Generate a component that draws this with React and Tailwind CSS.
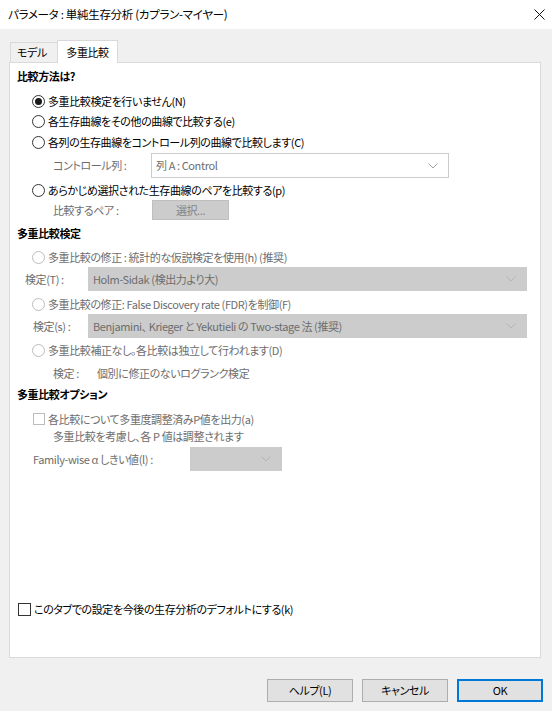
import React from 'react'

const font = { fontFamily: '"Noto Sans CJK JP", "Noto Sans", sans-serif' }

function Radio({ checked, disabled, label }) {
  return (
    <div className="flex items-center h-[16px] ml-[15px]">
      <span
        className={`w-[13px] h-[13px] rounded-full border flex items-center justify-center bg-white shrink-0 ${
          disabled ? 'border-[#bcbcbc]' : 'border-[#333333]'
        }`}
      >
        {checked && <span className="w-[7px] h-[7px] rounded-full bg-[#1a1a1a]" />}
      </span>
      <span className={`ml-[3px] whitespace-nowrap ${disabled ? 'text-[#6d6d6d]' : 'text-black'}`}>{label}</span>
    </div>
  )
}

function Chevron({ light }) {
  return (
    <svg width="10" height="6" viewBox="0 0 10 6" className="shrink-0">
      <path d="M0.5 0.5 L5 5 L9.5 0.5" fill="none" stroke={light ? '#b4b4b4' : '#a0a0a0'} strokeWidth="1" />
    </svg>
  )
}

function Select({ className, disabled, value }) {
  return (
    <div
      className={`flex items-center border pl-[4px] pr-[10px] ${
        disabled ? 'bg-[#cccccc] border-[#cccccc]' : 'bg-white border-[#cccccc]'
      } ${className}`}
    >
      <span className="flex-1 whitespace-nowrap text-[#6d6d6d]">{value}</span>
      <Chevron light={disabled} />
    </div>
  )
}

function Heading({ children, className }) {
  return <div className={`h-[16px] flex items-center font-bold text-black ${className}`}>{children}</div>
}

export default function App() {
  return (
    <div
      className="w-[552px] h-[711px] bg-[#f0f0f0] flex flex-col text-[11px] tracking-[-0.4px] leading-none overflow-hidden [font-feature-settings:'palt']"
      style={font}
    >
      {/* タイトルバー */}
      <div className="h-[29px] bg-white flex items-center pl-[8px] pr-[7px] shrink-0">
        <span className="flex-1 text-black text-[11.5px] tracking-[-0.3px]">パラメータ : 単純生存分析 (カプラン-マイヤー)</span>
        <svg width="11" height="11" viewBox="0 0 11 11">
          <path d="M0.5 0.5 L10.5 10.5 M10.5 0.5 L0.5 10.5" stroke="#111" strokeWidth="1" />
        </svg>
      </div>

      {/* タブ */}
      <div className="flex items-end h-[33px] pl-[10px] shrink-0 relative z-10">
        <div className="h-[20px] w-[48px] border border-b-0 border-[#d9d9d9] bg-[#f0f0f0] flex items-center pl-[6px]">
          モデル
        </div>
        <div className="h-[23px] w-[61px] -ml-[1px] border border-b-0 border-[#d9d9d9] bg-white flex items-center justify-center -mb-[1px]">
          多重比較
        </div>
      </div>

      {/* パネル */}
      <div className="ml-[9px] mr-[11px] h-[596px] bg-white border border-[#d9d9d9] flex flex-col pl-[7px] shrink-0">
        <Heading className="mt-[5px]">比較方法は?</Heading>
        <div className="mt-[9px]">
          <Radio checked label="多重比較検定を行いません(N)" />
        </div>
        <div className="mt-[4px]">
          <Radio label="各生存曲線をその他の曲線で比較する(e)" />
        </div>
        <div className="mt-[5px]">
          <Radio label="各列の生存曲線をコントロール列の曲線で比較します(C)" />
        </div>
        <div className="mt-[3px] flex items-center h-[25px]">
          <span className="ml-[36px] w-[98px] shrink-0 text-[#6d6d6d] whitespace-nowrap">コントロール列 :</span>
          <Select className="w-[298px] h-[25px]" value="列 A : Control" />
        </div>
        <div className="mt-[4px]">
          <Radio label="あらかじめ選択された生存曲線のペアを比較する(p)" />
        </div>
        <div className="mt-[2px] flex items-center h-[20px]">
          <span className="ml-[36px] w-[99px] shrink-0 text-[#6d6d6d] whitespace-nowrap">比較するペア :</span>
          <div className="w-[77px] h-[20px] bg-[#cccccc] border border-[#bfbfbf] flex items-center justify-center text-[#838383]">
            選択...
          </div>
        </div>

        <Heading className="mt-[5px]">多重比較検定</Heading>
        <div className="mt-[8px]">
          <Radio disabled label="多重比較の修正 :  統計的な仮説検定を使用(h) (推奨)" />
        </div>
        <div className="mt-[2px] flex items-center h-[24px]">
          <span className="ml-[8px] w-[63px] shrink-0 text-[#6d6d6d] whitespace-nowrap">検定(T) :</span>
          <Select disabled className="w-[439px] h-[24px]" value="Holm-Sidak (検出力より大)" />
        </div>
        <div className="mt-[5px]">
          <Radio disabled label="多重比較の修正: False Discovery rate (FDR)を制御(F)" />
        </div>
        <div className="mt-[2px] flex items-center h-[24px]">
          <span className="ml-[16px] w-[55px] shrink-0 text-[#6d6d6d] whitespace-nowrap">検定(s) :</span>
          <Select disabled className="w-[439px] h-[24px]" value="Benjamini、 Krieger と Yekutieli の Two-stage 法 (推奨)" />
        </div>
        <div className="mt-[4px]">
          <Radio disabled label="多重比較補正なし。各比較は独立して行われます(D)" />
        </div>
        <div className="mt-[7px] h-[16px] flex items-center text-[#6d6d6d]">
          <span className="ml-[36px] w-[44px] shrink-0">検定 :</span>
          <span>個別に修正のないログランク検定</span>
        </div>

        <Heading className="mt-[5px]">多重比較オプション</Heading>
        <div className="mt-[9px] h-[16px] flex items-center ml-[16px]">
          <span className="w-[12px] h-[12px] border border-[#bcbcbc] bg-white shrink-0" />
          <span className="ml-[3px] text-[#6d6d6d] whitespace-nowrap">各比較について多重度調整済みP値を出力(a)</span>
        </div>
        <div className="mt-[1px] h-[16px] flex items-center ml-[36px] text-[#6d6d6d]">
          多重比較を考慮し、各 P 値は調整されます
        </div>
        <div className="mt-[3px] flex items-center h-[24px]">
          <span className="ml-[16px] w-[157px] shrink-0 text-[#6d6d6d] whitespace-nowrap">Family-wise α しきい値(l) :</span>
          <Select disabled className="w-[92px] h-[24px]" value="" />
        </div>

        <div className="flex-1" />
        <div className="h-[16px] flex items-center ml-[1px] mb-[40px]">
          <span className="w-[13px] h-[13px] border border-[#333333] bg-white shrink-0" />
          <span className="ml-[3px] text-black whitespace-nowrap">このタブでの設定を今後の生存分析のデフォルトにする(k)</span>
        </div>
      </div>

      {/* ボタン */}
      <div className="flex justify-end gap-[9px] pr-[9px] mt-[21px]">
        <button className="w-[86px] h-[23px] bg-[#e1e1e1] border border-[#adadad] text-black">ヘルプ(L)</button>
        <button className="w-[86px] h-[23px] bg-[#e1e1e1] border border-[#adadad] text-black">キャンセル</button>
        <button className="w-[86px] h-[23px] bg-[#e1e1e1] border-2 border-[#0078d7] text-black">OK</button>
      </div>
    </div>
  )
}
